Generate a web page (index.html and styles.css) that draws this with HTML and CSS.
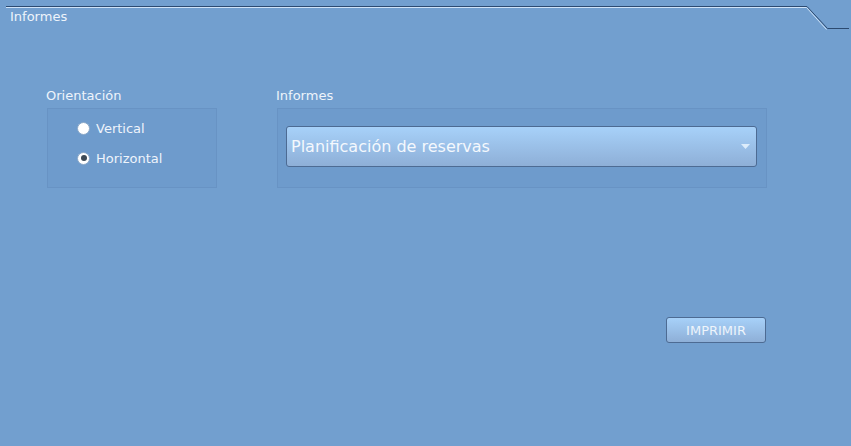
FILE: index.html
```html
<!DOCTYPE html>
<html>
<head>
<meta charset="utf-8">
<link rel="stylesheet" href="styles.css">
</head>
<body>
<div class="window">
  <svg class="tabline" width="851" height="32" viewBox="0 0 851 32">
    <polyline points="6,6.5 807,6.5 827.5,28.5 849,28.5" fill="none" stroke="#2c4a70" stroke-width="1"/>
    <polyline points="6,7.5 806.5,7.5 826.5,29.5" fill="none" stroke="#cfe3f8" stroke-width="1"/>
  </svg>
  <div class="title">Informes</div>
  <div class="content">
    <div class="col col-left">
      <div class="label">Orientación</div>
      <div class="group group-orient">
        <label class="radio"><span class="dot"></span><span>Vertical</span></label>
        <label class="radio"><span class="dot checked"></span><span>Horizontal</span></label>
      </div>
    </div>
    <div class="col col-right">
      <div class="label">Informes</div>
      <div class="group group-report">
        <div class="select">
          <span>Planificación de reservas</span>
          <svg class="arrow" width="9" height="5" viewBox="0 0 9 5"><path d="M0 0 H9 L4.5 5 Z" fill="#dcecfb"/></svg>
        </div>
      </div>
      <div class="actions">
        <button class="btn">IMPRIMIR</button>
      </div>
    </div>
  </div>
</div>
</body>
</html>
```
FILE: styles.css
```css
html, body {
  margin: 0;
  padding: 0;
  background: #729fcf;
}
body {
  width: 851px;
  height: 446px;
  overflow: hidden;
  font-family: "DejaVu Sans", sans-serif;
  color: #eef4fb;
}
.window {
  position: relative;
  height: 446px;
}
.tabline {
  position: absolute;
  left: 0;
  top: 0;
}
.title {
  padding: 9px 0 0 10px;
  font-size: 13px;
  line-height: 16px;
  height: 16px;
}
.content {
  display: flex;
  padding: 63px 0 0 46px;
}
.label {
  font-size: 13px;
  line-height: 16px;
  height: 16px;
  margin-bottom: 4px;
}
.col-left {
  width: 230px;
}
.group {
  box-sizing: border-box;
  margin-left: 1px;
  background: #6e9bcc;
  border: 1px solid #6893c4;
}
.group-orient {
  width: 170px;
  height: 80px;
  padding: 10px 0 0 29px;
}
.radio {
  display: flex;
  align-items: center;
  height: 18px;
  margin-bottom: 12px;
  font-size: 13px;
}
.dot {
  box-sizing: border-box;
  width: 13px;
  height: 13px;
  border-radius: 50%;
  background: #ffffff;
  border: 1px solid #8aa8c8;
  margin-right: 6px;
  display: flex;
  align-items: center;
  justify-content: center;
}
.dot.checked::after {
  content: "";
  width: 6px;
  height: 6px;
  border-radius: 50%;
  background: #3d4a56;
}
.col-right {
  width: 490px;
}
.group-report {
  width: 490px;
  height: 80px;
  padding: 17px 0 0 8px;
}
.select {
  box-sizing: border-box;
  width: 471px;
  height: 41px;
  border: 1px solid #4d6b93;
  border-radius: 3px;
  background: linear-gradient(#a7d1f9, #8eafd7);
  display: flex;
  align-items: center;
  padding: 0 0 0 4px;
  font-size: 16px;
  color: #f4f8fd;
}
.select span {
  flex: 1;
}
.arrow {
  margin-right: 6px;
}
.actions {
  display: flex;
  justify-content: flex-end;
  margin-top: 129px;
}
.btn {
  box-sizing: border-box;
  width: 100px;
  height: 26px;
  border: 1px solid #4d6b93;
  border-radius: 3px;
  background: linear-gradient(#a7d1f9, #8eafd7);
  font-family: "DejaVu Sans", sans-serif;
  font-size: 13px;
  color: #eef4fb;
  padding: 0;
  margin: 0;
}
```
